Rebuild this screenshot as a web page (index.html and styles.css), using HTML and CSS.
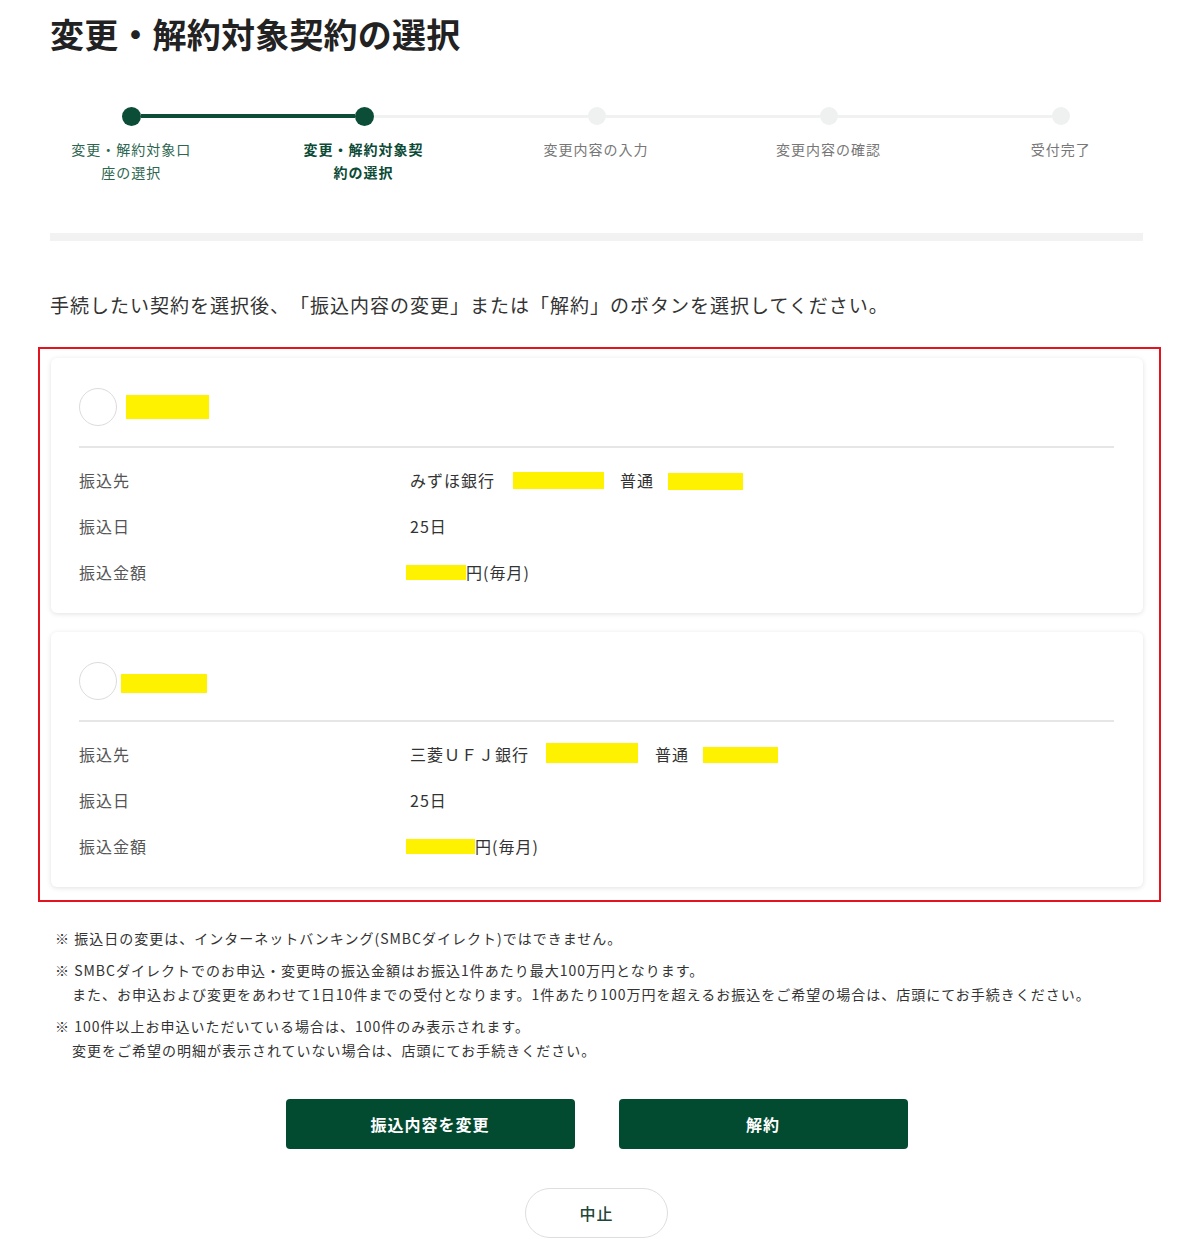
FILE: index.html
```html
<!DOCTYPE html>
<html lang="ja">
<head>
    <meta charset="UTF-8">
    <meta name="viewport" content="width=device-width, initial-scale=1.0">
    <title>変更・解約対象契約の選択</title>
    <link rel="stylesheet" href="styles.css">
</head>
<body>
    <div class="page">
        <!-- Title -->
        <h1 class="page-title">変更・解約対象契約の選択</h1>

        <!-- Stepper -->
        <div class="stepper">
            <div class="track">
                <span class="dot done"></span>
                <span class="line done"></span>
                <span class="dot done"></span>
                <span class="line"></span>
                <span class="dot"></span>
                <span class="line"></span>
                <span class="dot"></span>
                <span class="line"></span>
                <span class="dot"></span>
            </div>
            <div class="labels">
                <div class="step-label done">変更・解約対象口座の選択</div>
                <div class="step-label current">変更・解約対象契約の選択</div>
                <div class="step-label">変更内容の入力</div>
                <div class="step-label">変更内容の確認</div>
                <div class="step-label">受付完了</div>
            </div>
        </div>

        <div class="divider-bar"></div>

        <p class="lead">手続したい契約を選択後、「振込内容の変更」または「解約」のボタンを選択してください。</p>

        <!-- Contracts -->
        <div class="highlight">
            <div class="card">
                <div class="card-head">
                    <span class="radio"></span>
                    <span class="mask head-mask-1"></span>
                </div>
                <dl class="rows">
                    <dt>振込先</dt>
                    <dd>みずほ銀行<span class="mask m-branch-1"></span>普通<span class="mask m-acct-1"></span></dd>
                    <dt>振込日</dt>
                    <dd>25日</dd>
                    <dt>振込金額</dt>
                    <dd class="amount"><span class="mask m-amt-1"></span>円(毎月)</dd>
                </dl>
            </div>

            <div class="card">
                <div class="card-head">
                    <span class="radio"></span>
                    <span class="mask head-mask-2"></span>
                </div>
                <dl class="rows">
                    <dt>振込先</dt>
                    <dd>三菱ＵＦＪ銀行<span class="mask m-branch-2"></span>普通<span class="mask m-acct-2"></span></dd>
                    <dt>振込日</dt>
                    <dd>25日</dd>
                    <dt>振込金額</dt>
                    <dd class="amount"><span class="mask m-amt-2"></span>円(毎月)</dd>
                </dl>
            </div>
        </div>

        <!-- Notes -->
        <div class="notes">
            <p>※ 振込日の変更は、インターネットバンキング(SMBCダイレクト)ではできません。</p>
            <p>※ SMBCダイレクトでのお申込・変更時の振込金額はお振込1件あたり最大100万円となります。<br>また、お申込および変更をあわせて1日10件までの受付となります。1件あたり100万円を超えるお振込をご希望の場合は、店頭にてお手続きください。</p>
            <p>※ 100件以上お申込いただいている場合は、100件のみ表示されます。<br>変更をご希望の明細が表示されていない場合は、店頭にてお手続きください。</p>
        </div>

        <!-- Actions -->
        <div class="actions">
            <button class="btn-primary" type="button">振込内容を変更</button>
            <button class="btn-primary" type="button">解約</button>
        </div>
        <div class="actions-sub">
            <button class="btn-cancel" type="button">中止</button>
        </div>
    </div>
</body>
</html>
```

FILE: styles.css
```css
/* General Reset */
* {
    margin: 0;
    padding: 0;
    box-sizing: border-box;
}

body {
    font-family: "Noto Sans CJK JP", "Noto Sans", sans-serif;
    background: #fff;
    color: #333;
    text-spacing-trim: space-all;
}

.page {
    width: 1200px;
    padding: 0 57px 0 50px;
}

.page-title {
    font-size: 34px;
    font-weight: 700;
    color: #222;
    line-height: 44px;
    padding-top: 12px;
    letter-spacing: 0.2px;
}

/* Stepper */
.stepper {
    margin: 50px -34px 0 -35px;
}

.track {
    display: flex;
    align-items: center;
    padding: 0 107px;
    height: 20px;
}

.dot {
    width: 18px;
    height: 18px;
    border-radius: 50%;
    background: #eef1f0;
    flex: none;
}

.dot.done {
    width: 19px;
    height: 19px;
    background: #0b4d37;
}

.line {
    flex: 1;
    height: 3px;
    background: #f0f2f1;
}

.line.done {
    height: 4px;
    background: #0b4d37;
}

.labels {
    display: grid;
    grid-template-columns: repeat(5, 1fr);
    margin-top: 12px;
}

.step-label {
    justify-self: center;
    max-width: 124px;
    text-align: center;
    font-size: 14px;
    line-height: 23px;
    letter-spacing: 1px;
    color: #777;
}

.step-label.done {
    color: #2d6650;
}

.step-label.current {
    color: #0b4a35;
    font-weight: 700;
}

.divider-bar {
    height: 8px;
    background: #f2f2f2;
    margin-top: 49px;
}

.lead {
    font-size: 19px;
    letter-spacing: 1px;
    line-height: 30px;
    color: #333;
    margin-top: 49px;
}

/* Contract cards */
.highlight {
    border: 2px solid #e3141f;
    margin: 27px -18px 0 -12px;
    padding: 9px 16px 13px 11px;
    display: flex;
    flex-direction: column;
    gap: 19px;
}

.card {
    background: #fff;
    border-radius: 6px;
    box-shadow: 0 1px 5px rgba(0, 0, 0, 0.12);
    padding: 30px 29px 18px 28px;
}

.card-head {
    display: flex;
    align-items: center;
    padding-bottom: 20px;
    border-bottom: 2px solid #e6e6e6;
}

.radio {
    width: 38px;
    height: 38px;
    border-radius: 50%;
    border: 1px solid #dcdcdc;
    background: #fff;
    flex: none;
}

.mask {
    display: inline-block;
    background: #fff200;
    vertical-align: middle;
}

.head-mask-1 {
    width: 83px;
    height: 24px;
    margin-left: 9px;
}

.head-mask-2 {
    width: 86px;
    height: 19px;
    margin-left: 4px;
    margin-top: 4px;
}

.rows {
    display: grid;
    grid-template-columns: 331px 1fr;
    margin-top: 9px;
}

.rows dt,
.rows dd {
    height: 46px;
    display: flex;
    align-items: center;
    font-size: 16px;
    letter-spacing: 1px;
}

.rows dt {
    color: #555;
}

.rows dd {
    color: #333;
}

.rows dd.amount {
    margin-left: -4px;
}

.m-branch-1 {
    width: 91px;
    height: 17px;
    margin: 0 16px 0 18px;
}

.m-acct-1 {
    width: 75px;
    height: 17px;
    margin: 2px 0 0 14px;
}

.m-amt-1 {
    width: 60px;
    height: 15px;
}

.m-branch-2 {
    width: 92px;
    height: 20px;
    margin: -3px 17px 0 17px;
}

.m-acct-2 {
    width: 75px;
    height: 16px;
    margin: 1px 0 0 14px;
}

.m-amt-2 {
    width: 69px;
    height: 15px;
}

/* Notes */
.notes {
    margin-top: 24px;
    padding-left: 5px;
}

.notes p {
    font-size: 14px;
    line-height: 24px;
    letter-spacing: 1px;
    color: #333;
    padding-left: 17px;
    text-indent: -17px;
    margin-bottom: 8px;
}

/* Buttons */
.actions {
    display: flex;
    justify-content: center;
    gap: 44px;
    margin-top: 37px;
}

.btn-primary {
    width: 289px;
    height: 50px;
    border: none;
    border-radius: 4px;
    background: #024b31;
    color: #fff;
    font-family: inherit;
    font-size: 16px;
    font-weight: 700;
    letter-spacing: 1px;
    cursor: pointer;
}

.actions-sub {
    display: flex;
    justify-content: center;
    margin-top: 39px;
}

.btn-cancel {
    width: 143px;
    height: 50px;
    border: 1px solid #dedede;
    border-radius: 25px;
    background: #fff;
    color: #1f4638;
    font-family: inherit;
    font-size: 16px;
    font-weight: 500;
    letter-spacing: 1px;
    cursor: pointer;
}
```
